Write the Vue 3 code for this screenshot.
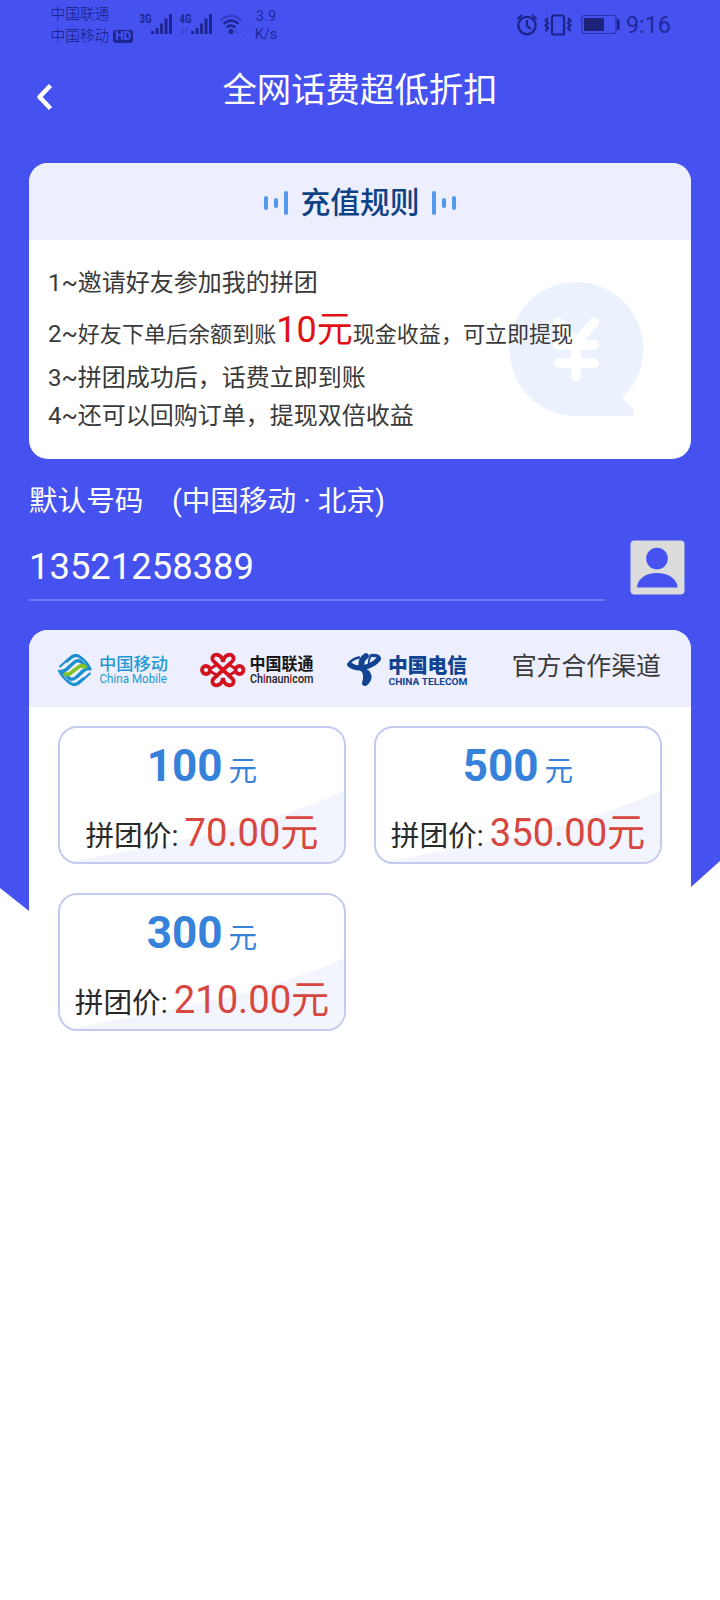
<script setup>
const packages = [
  { amount: '100', price: '70.00' },
  { amount: '500', price: '350.00' },
  { amount: '300', price: '210.00' },
]
</script>

<template>
  <div class="page">
    <div class="backdrop"></div>
    <div class="content">
      <div class="status">
        <div class="carriers">
          <div>中国联通</div>
          <div class="carrier-row">中国移动<span class="hd">HD</span></div>
        </div>
        <svg class="signals" width="106" height="30" viewBox="138 9 106 30">
          <g fill="#1d2592">
            <rect x="151" y="31" width="3" height="3" /><rect x="155.5" y="28" width="3" height="6" /><rect x="160" y="23.500" width="3" height="10.500" /><rect x="164.500" y="18.500" width="3" height="15.500" /><rect x="169" y="14" width="3" height="20" />
            <rect x="191" y="31" width="3" height="3" /><rect x="195.500" y="28" width="3" height="6" /><rect x="200" y="23.500" width="3" height="10.500" /><rect x="204.500" y="18.500" width="3" height="15.500" /><rect x="209" y="14" width="3" height="20" />
            <text x="139.500" y="22.500" class="net" textLength="12" lengthAdjust="spacingAndGlyphs">3G</text>
            <text x="179.500" y="22.500" class="net" textLength="12" lengthAdjust="spacingAndGlyphs">4G</text>
            <circle cx="231" cy="31.500" r="2.500" />
          </g>
          <path d="M183 28v5M181.500 31.500l1.500 2 1.500-2M187 33v-5M185.500 29.500l1.500-2 1.500 2" fill="none" stroke="#363fc4" stroke-width="1" />
          <g fill="none" stroke="#1d2592" stroke-width="2.300">
            <path d="M220.500 20.500Q231 11 241.500 20.500" stroke="#343dc4" />
            <path d="M223.500 24Q231 17 238.500 24" />
            <path d="M226.500 27.500Q231 23.500 235.500 27.500" />
          </g>
          <path d="M237.500 29.500l-1.500 2 1.500 2M240 29.500l1.500 2-1.500 2" fill="none" stroke="#363fc4" />
        </svg>
        <div class="speed"><div>3.9</div><div>K/s</div></div>
        <svg class="sys" width="104" height="30" viewBox="516 10 104 30">
          <g fill="none" stroke="#1b2388" stroke-width="2.200">
            <circle cx="527" cy="25.500" r="8.700" />
            <path d="M527 20v6l4 3M517.500 19l4.500-4M532 15l4.500 4" />
            <rect x="552" y="15.500" width="12" height="19" rx="1.500" />
            <path d="M548 18l-2.500 2.500 2.500 2.500-2.500 2.500 2.500 2.500-2.500 3M568 18l2.500 2.500-2.500 2.500 2.500 2.500-2.500 2.500 2.500 3" />
          </g>
          <rect x="582" y="15.500" width="34" height="18" rx="2.500" fill="none" stroke="#2a33ab" stroke-width="1.200" />
          <rect x="584" y="18" width="20" height="13" fill="#1c2378" />
          <rect x="617" y="19" width="2.500" height="11" rx="1" fill="#1b2388" />
        </svg>
        <div class="clock">9:16</div>
      </div>

      <div class="nav">
        <svg class="back" width="22" height="34" viewBox="0 0 22 34"><path d="M16.500 5.500L5.500 17l11 11.500" fill="none" stroke="#fff" stroke-width="4.600" stroke-linejoin="round" /></svg>
        <h1>全网话费超低折扣</h1>
      </div>

      <section class="rules">
        <header class="rules-head">
          <div class="bars"><i class="mid"></i><i class="low"></i><i></i></div>
          <h2>充值规则</h2>
          <div class="bars"><i></i><i class="low"></i><i class="mid"></i></div>
        </header>
        <div class="rules-body">
          <svg class="watermark" width="136" height="136" viewBox="508 281 136 136">
            <path d="M576 416A67 67 0 1 1 622 398Q632 405 634 412Q635 416 631 416Z" fill="#ecf2fd" />
            <path d="M558 322L576 343L594 322M558 345H594M558 363H594M576 343V377" fill="none" stroke="#fff" stroke-width="9.500" stroke-linecap="round" stroke-linejoin="round" />
          </svg>
          <p>1~邀请好友参加我的拼团</p>
          <p class="reward">2~<span class="small">好友下单后余额到账</span><span class="ten">10元</span><span class="small">现金收益，可立即提现</span></p>
          <p>3~拼团成功后，话费立即到账</p>
          <p>4~还可以回购订单，提现双倍收益</p>
        </div>
      </section>

      <div class="label">默认号码　(中国移动 · 北京)</div>
      <div class="phone-row">
        <div class="phone">13521258389</div>
        <svg class="contact" width="55" height="55" viewBox="0 0 55 55">
          <rect x=".500" y=".500" width="54" height="54" rx="4" fill="#dcdcdc" />
          <circle cx="27" cy="18.500" r="10.800" fill="#4552f0" />
          <path d="M7 47.500C7 39 16 33 27 33s20.500 6 20.500 14.500z" fill="#4552f0" />
        </svg>
      </div>

      <section class="shop">
        <header class="channels">
          <svg class="logo-mobile" width="114" height="40" viewBox="56 650 114 40">
            <g fill="none" stroke="#1c8fd0" stroke-width="3.400">
              <path d="M59.500 667L69.500 658Q75 652 81 657.500Q87 661.500 91 670" stroke-width="2.200" />
              <path d="M61 671.500Q65 671.500 69 667L74 662.500Q79 658.500 83 663.500Q87 668 90.500 669" />
              <path d="M90.500 673L80.500 682Q75 688 69 682.500Q63 678.500 58.500 670" stroke-width="2.200" />
              <path d="M89 668.500Q85 668.500 81 673L76 677.500Q71 681.500 67 676.500Q63 672 60 671" />
              <path d="M66 662L73 656.500Q78 654 82 659" stroke-width="2.600" />
              <path d="M84 678L77 683.500Q72 686 68 681" stroke-width="2.600" />
              <path d="M64 673Q68 676.500 72 672L78 667.500Q82 663.500 86.500 668" stroke="#84c225" stroke-width="3.800" />
            </g>
            <text x="99" y="669.500" class="cn" fill="#2398d2" textLength="69" lengthAdjust="spacingAndGlyphs">中国移动</text>
            <text x="99.500" y="682.800" class="en" fill="#2398d2" textLength="67.500" lengthAdjust="spacingAndGlyphs">China Mobile</text>
          </svg>
          <svg class="logo-unicom" width="116" height="40" viewBox="200 650 116 40">
            <g fill="none" stroke="#d3121e" stroke-width="3.800">
              <circle cx="206" cy="670" r="4" /><circle cx="239.500" cy="670" r="4" />
              <path d="M223 662C222 652.500 211 653 212.500 659.500Q213 661 216 663.500L230 676.500Q233 679 233.500 680.500C235 687 224 687.500 223 678C222 687.500 211 687 212.500 680.500Q213 679 216 676.500L230 663.500Q233 661 233.500 659.500C235 653 224 652.500 223 662Z" />
              <path d="M210 669L217 664.500M210 671L217 675.500M236 669L229 664.500M236 671L229 675.500" stroke-width="2.800" />
            </g>
            <text x="249.500" y="669.500" class="cn bold" fill="#161616" textLength="64" lengthAdjust="spacingAndGlyphs">中国联通</text>
            <text x="250" y="682.800" class="en medium" fill="#222" textLength="63.500" lengthAdjust="spacingAndGlyphs">Ch<tspan fill="#d3121e">i</tspan>naun<tspan fill="#d3121e">i</tspan>com</text>
          </svg>
          <svg class="logo-telecom" width="124" height="40" viewBox="346 650 124 40">
            <g fill="none" stroke="#124391" stroke-linecap="round">
              <path d="M359 657.500Q352 659 349 663.500" stroke-width="2.600" />
              <path d="M349.500 664.500Q355 669 364 667.500Q374 665 378.500 659" stroke-width="5" />
              <path d="M378.500 659Q381 655 371 655.500" stroke-width="3.200" />
              <path d="M366 656Q359.500 660 362 668.500" stroke-width="5.800" />
              <path d="M370.500 656.500Q368 661 369 665" stroke-width="1.800" />
              <path d="M363 668Q368 675 365 683" stroke-width="6" />
              <path d="M368 672Q372 678 367 683" stroke-width="3.500" />
            </g>
            <text x="388" y="672.500" class="cn brush" fill="#124391" textLength="79" lengthAdjust="spacingAndGlyphs">中国电信</text>
            <text x="388.500" y="685" class="tele" fill="#124391" textLength="79" lengthAdjust="spacingAndGlyphs">CHINA TELECOM</text>
          </svg>
          <span class="official">官方合作渠道</span>
        </header>
        <div class="grid">
          <article v-for="item in packages" :key="item.amount" class="item">
            <svg class="wave" width="284" height="134" viewBox="0 0 284 134"><path d="M10 134C100 116 200 102 284 63V134Z" fill="#f2f5fd" /></svg>
            <div class="amount"><b>{{ item.amount }}</b><span>元</span></div>
            <div class="price">拼团价:<em>{{ item.price }}元</em></div>
          </article>
        </div>
      </section>
    </div>
  </div>
</template>

<style>
body {
  background: #fff;
}
</style>

<style scoped>
* {
  box-sizing: border-box;
  margin: 0;
  padding: 0;
}
svg {
  flex: none;
  overflow: visible;
}
.page {
  position: relative;
  width: 720px;
  height: 1600px;
  overflow: hidden;
  background: #fff;
  font-family: Roboto, 'Noto Sans CJK SC', sans-serif;
}
.backdrop {
  position: absolute;
  top: 0;
  left: 0;
  width: 720px;
  height: 1000px;
  background: #4552f0;
  clip-path: polygon(0 0, 100% 0, 720px 861px, 691px 887px, 400px 1000px, 29px 911px, 0 888px);
}
.content {
  position: relative;
}
.status {
  display: flex;
  align-items: flex-start;
  height: 50px;
  padding-left: 50.5px;
  color: #20289a;
}
.carriers {
  width: 87.5px;
  padding-top: 4px;
  font-size: 14.7px;
  line-height: 21.5px;
  font-weight: 300;
  color: #161d80;
  white-space: nowrap;
}
.carrier-row {
  display: flex;
  align-items: center;
}
.hd {
  width: 20px;
  height: 13px;
  margin-left: 4px;
  border-radius: 3px;
  background: #1d2592;
  color: #4552f0;
  font-size: 12px;
  font-weight: 900;
  line-height: 13px;
  text-align: center;
}
.signals {
  margin-top: 9px;
}
.net {
  font-size: 12.500px;
  font-weight: 700;
}
.speed {
  width: 24px;
  margin-left: 10px;
  padding-top: 7px;
  font-size: 14.6px;
  line-height: 18px;
  text-align: center;
}
.sys {
  margin: 10px 0 0 238px;
}
.clock {
  margin-left: 6px;
  font-size: 23.3px;
  line-height: 51px;
}
.nav {
  display: grid;
  grid-template-columns: 60px 1fr 60px;
  align-items: center;
  height: 82px;
}
.back {
  margin: 11px 0 0 34px;
}
h1 {
  color: #fff;
  font-size: 34.4px;
  font-weight: 400;
  line-height: 81px;
  padding-bottom: 1px;
  text-align: center;
}
.rules,
.shop {
  margin: 0 29px;
  border-radius: 19px;
  background: #fff;
  overflow: hidden;
}
.rules {
  margin-top: 31px;
  height: 296px;
}
.rules-head {
  display: flex;
  align-items: center;
  justify-content: center;
  gap: 12px;
  height: 77px;
  background: #edeffe;
}
h2 {
  padding-top: 2px;
  color: #0e4285;
  font-size: 29.8px;
  font-weight: 500;
  line-height: 40px;
}
.bars {
  display: flex;
  align-items: center;
  gap: 6px;
  padding-top: 2px;
}
.bars i {
  width: 4px;
  height: 24px;
  border-radius: 2px;
  background: #5398ea;
}
.bars .mid {
  height: 14px;
}
.bars .low {
  height: 10px;
}
.rules-body {
  position: relative;
  padding: 24px 19px;
  color: #3a3a3a;
  font-size: 24px;
  line-height: 38px;
}
.rules-body p {
  position: relative;
  height: 38px;
  white-space: nowrap;
}
.rules-body .reward {
  height: 57px;
  padding-top: 7px;
  line-height: 50px;
}
.small,
.ten {
  font-size: 22.05px;
  line-height: 0;
}
.ten {
  color: #e01014;
  font-size: 36px;
}
.watermark {
  position: absolute;
  top: 41px;
  left: 479px;
}
.label {
  margin: 21px 29px 0;
  color: #fff;
  font-size: 28.6px;
  line-height: 42px;
  white-space: nowrap;
}
.phone-row {
  display: flex;
  justify-content: space-between;
  align-items: center;
  margin: 10px 35px 29px 29px;
  height: 69px;
}
.phone {
  width: 576px;
  height: 69px;
  padding-top: 2px;
  border-bottom: 2px solid #6f7af5;
  color: #fff;
  font-size: 36.4px;
  line-height: 66px;
}
.contact {
  margin-top: 2px;
}
.channels {
  display: flex;
  align-items: center;
  height: 77px;
  padding: 3px 30px 0 27px;
  background: #edeffe;
}
.logo-unicom {
  margin-left: 30px;
}
.logo-telecom {
  margin-left: 30px;
}
.cn {
  font-size: 17px;
  font-weight: 500;
}
.bold {
  font-weight: 700;
}
.brush {
  font-family: 'Noto Sans CJK SC', sans-serif;
  font-size: 20px;
  font-weight: 900;
}
.en {
  font-size: 12px;
}
.medium {
  font-weight: 500;
}
.tele {
  font-size: 8.500px;
  font-weight: 700;
}
.official {
  margin: -7px 0 0 auto;
  color: #3a3a3a;
  font-size: 24.9px;
  line-height: 36px;
}
.grid {
  display: grid;
  grid-template-columns: 288px 288px;
  grid-auto-rows: 138px;
  gap: 29px 28px;
  padding: 19px 29px 24px;
}
.item {
  position: relative;
  padding-top: 8px;
  border: 2px solid #c5caf0;
  border-radius: 19px;
  overflow: hidden;
  text-align: center;
  white-space: nowrap;
}
.wave {
  position: absolute;
  top: 0;
  left: 0;
}
.amount {
  position: relative;
  color: #3682da;
  font-size: 44px;
  line-height: 60px;
}
.amount b {
  font-weight: 700;
}
.amount span {
  margin-left: 6px;
  font-size: 28.6px;
  line-height: 0;
}
.price {
  position: relative;
  margin-top: 15px;
  color: #2a2a2a;
  font-size: 28.7px;
  line-height: 50px;
}
.price em {
  margin-left: 6px;
  color: #d74740;
  font-size: 38.2px;
  font-style: normal;
  line-height: 0;
}
</style>
